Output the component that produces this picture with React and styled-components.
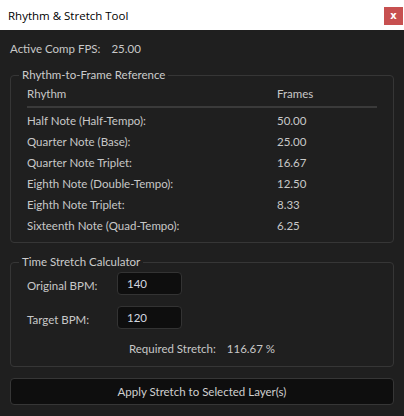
import React from 'react';
import styled, { createGlobalStyle } from 'styled-components';

const GlobalStyle = createGlobalStyle`
  html, body {
    margin: 0;
    padding: 0;
    background: #1f1f1f;
  }
  body {
    font-family: Lato, "Open Sans", sans-serif;
    font-size: 11.5px;
    color: #c8c8c8;
  }
`

const Window = styled.div`
  width: 404px;
  height: 416px;
  background: #1f1f1f;
  overflow: hidden;
`

const TitleBar = styled.div`
  height: 30px;
  background: #ffffff;
  display: flex;
  align-items: center;
  padding-left: 8px;
  color: #000;
  font-family: "Open Sans", sans-serif;
  font-size: 11.5px;
`

const CloseButton = styled.button`
  margin-left: auto;
  margin-right: 1px;
  width: 19px;
  height: 18px;
  border: none;
  background: #c75050;
  color: #fff;
  font-family: "DejaVu Sans", sans-serif;
  font-size: 10px;
  font-weight: bold;
  line-height: 18px;
  padding: 0;
  align-self: flex-start;
  margin-top: 7px;
`

const Body = styled.div`
  padding: 10px 10px 0;
`

const InfoLine = styled.div`
  display: flex;
  gap: 11px;
  line-height: 18px;
`

const Group = styled.fieldset`
  margin: ${p => p.$top}px 0 0;
  padding: 0 16px ${p => p.$bottom}px;
  border: 1px solid #363636;
  border-radius: 4px;
  min-width: 0;
`

const Legend = styled.legend`
  margin-left: -8px;
  padding: 0 3px;
  line-height: 16px;
  color: #cccccc;
`

const Table = styled.div`
  display: grid;
  grid-template-columns: 250px 1fr;
  padding-top: 2px;
`

const HeadCell = styled.div`
  line-height: 18px;
  padding-bottom: 3px;
  border-bottom: 2px solid #3a3a3a;
  margin-bottom: 2px;
`

const Cell = styled.div`
  line-height: 21px;
`

const FormRow = styled.div`
  display: flex;
  align-items: center;
  margin-top: ${p => p.$top}px;
`

const FieldLabel = styled.label`
  width: 90px;
  padding-top: 3px;
`

const NumberInput = styled.input`
  box-sizing: border-box;
  width: 65px;
  height: 23px;
  background: #0e0e0e;
  border: 1px solid #333333;
  border-radius: 4px;
  color: #d4d8e0;
  font-family: inherit;
  font-size: 11.5px;
  padding: 0 9px;
  outline: none;
`

const Result = styled.div`
  display: flex;
  justify-content: center;
  gap: 11px;
  line-height: 18px;
  margin-top: 11px;
`

const ApplyButton = styled.button`
  display: block;
  box-sizing: border-box;
  width: 100%;
  height: 27px;
  margin-top: 11px;
  background: #0e0e0e;
  border: 1px solid #363636;
  border-radius: 4px;
  color: #d0d0d0;
  font-family: inherit;
  font-size: 11.5px;
`

const rhythms = [
  ['Half Note (Half-Tempo):', '50.00'],
  ['Quarter Note (Base):', '25.00'],
  ['Quarter Note Triplet:', '16.67'],
  ['Eighth Note (Double-Tempo):', '12.50'],
  ['Eighth Note Triplet:', '8.33'],
  ['Sixteenth Note (Quad-Tempo):', '6.25'],
];

export default function App() {
  return (
    <Window>
      <GlobalStyle />
      <TitleBar>
        Rhythm &amp; Stretch Tool
        <CloseButton>x</CloseButton>
      </TitleBar>
      <Body>
        <InfoLine>
          <span>Active Comp FPS:</span>
          <span>25.00</span>
        </InfoLine>

        <Group $top={9} $bottom={6}>
          <Legend>Rhythm-to-Frame Reference</Legend>
          <Table>
            <HeadCell>Rhythm</HeadCell>
            <HeadCell>Frames</HeadCell>
            {rhythms.map(([name, frames]) => (
              <React.Fragment key={name}>
                <Cell>{name}</Cell>
                <Cell>{frames}</Cell>
              </React.Fragment>
            ))}
          </Table>
        </Group>

        <Group $top={11} $bottom={8}>
          <Legend>Time Stretch Calculator</Legend>
          <FormRow $top={2}>
            <FieldLabel>Original BPM:</FieldLabel>
            <NumberInput defaultValue="140" />
          </FormRow>
          <FormRow $top={11}>
            <FieldLabel>Target BPM:</FieldLabel>
            <NumberInput defaultValue="120" />
          </FormRow>
          <Result>
            <span>Required Stretch:</span>
            <span>116.67 %</span>
          </Result>
        </Group>

        <ApplyButton>Apply Stretch to Selected Layer(s)</ApplyButton>
      </Body>
    </Window>
  );
}
